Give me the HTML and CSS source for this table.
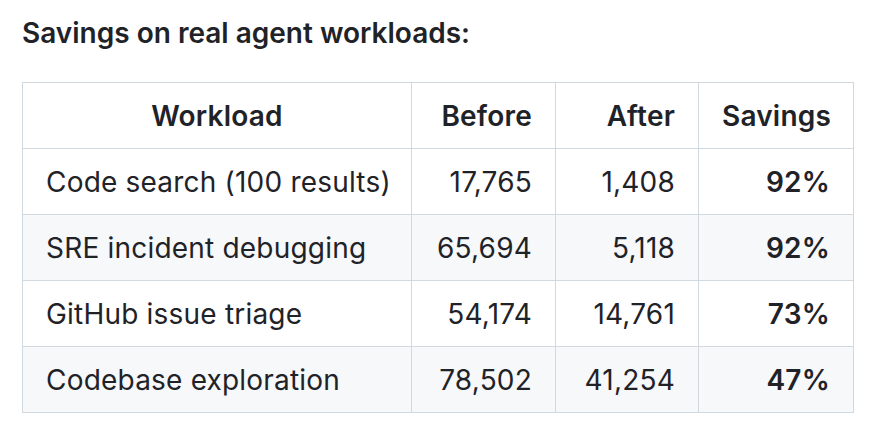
FILE: index.html
```html
<!DOCTYPE html>
<html>
<head>
<meta charset="utf-8">
<link rel="stylesheet" href="styles.css">
</head>
<body>
<div class="page">
  <p class="title">Savings on real agent workloads:</p>
  <table class="data">
    <colgroup>
      <col class="c1"><col class="c2"><col class="c3"><col class="c4">
    </colgroup>
    <thead>
      <tr><th class="center">Workload</th><th class="right">Before</th><th class="right">After</th><th class="right">Savings</th></tr>
    </thead>
    <tbody>
      <tr><td>Code search (100 results)</td><td class="right">17,765</td><td class="right">1,408</td><td class="right"><strong>92%</strong></td></tr>
      <tr><td>SRE incident debugging</td><td class="right">65,694</td><td class="right">5,118</td><td class="right"><strong>92%</strong></td></tr>
      <tr><td>GitHub issue triage</td><td class="right">54,174</td><td class="right">14,761</td><td class="right"><strong>73%</strong></td></tr>
      <tr><td>Codebase exploration</td><td class="right">78,502</td><td class="right">41,254</td><td class="right"><strong>47%</strong></td></tr>
    </tbody>
  </table>
</div>
</body>
</html>
```
FILE: styles.css
```css
html, body {
  margin: 0;
  padding: 0;
  background: #ffffff;
}
body {
  font-family: Inter, "Liberation Sans", Arial, sans-serif;
  color: #1f2328;
}
.page {
  padding: 12px 22px 0 22px;
}
.title {
  margin: 0 0 28px 0;
  font-size: 28px;
  line-height: 42px;
  font-weight: 600;
}
.data {
  border-collapse: collapse;
  border-spacing: 0;
  table-layout: fixed;
  width: 831px;
  font-size: 28px;
  letter-spacing: 0.2px;
}
.c1 { width: 389px; }
.c2 { width: 144px; }
.c3 { width: 143px; }
.c4 { width: 155px; }
.data th, .data td {
  border: 1px solid #d1d9e0;
  padding: 0 23px;
  height: 65px;
  line-height: 42px;
  text-align: left;
  white-space: nowrap;
}
.data th {
  font-weight: 600;
}
.data strong {
  font-weight: 600;
}
.data tbody tr:nth-child(2n) {
  background: #f6f8fa;
}
.center { text-align: center !important; }
.right { text-align: right !important; }
```
